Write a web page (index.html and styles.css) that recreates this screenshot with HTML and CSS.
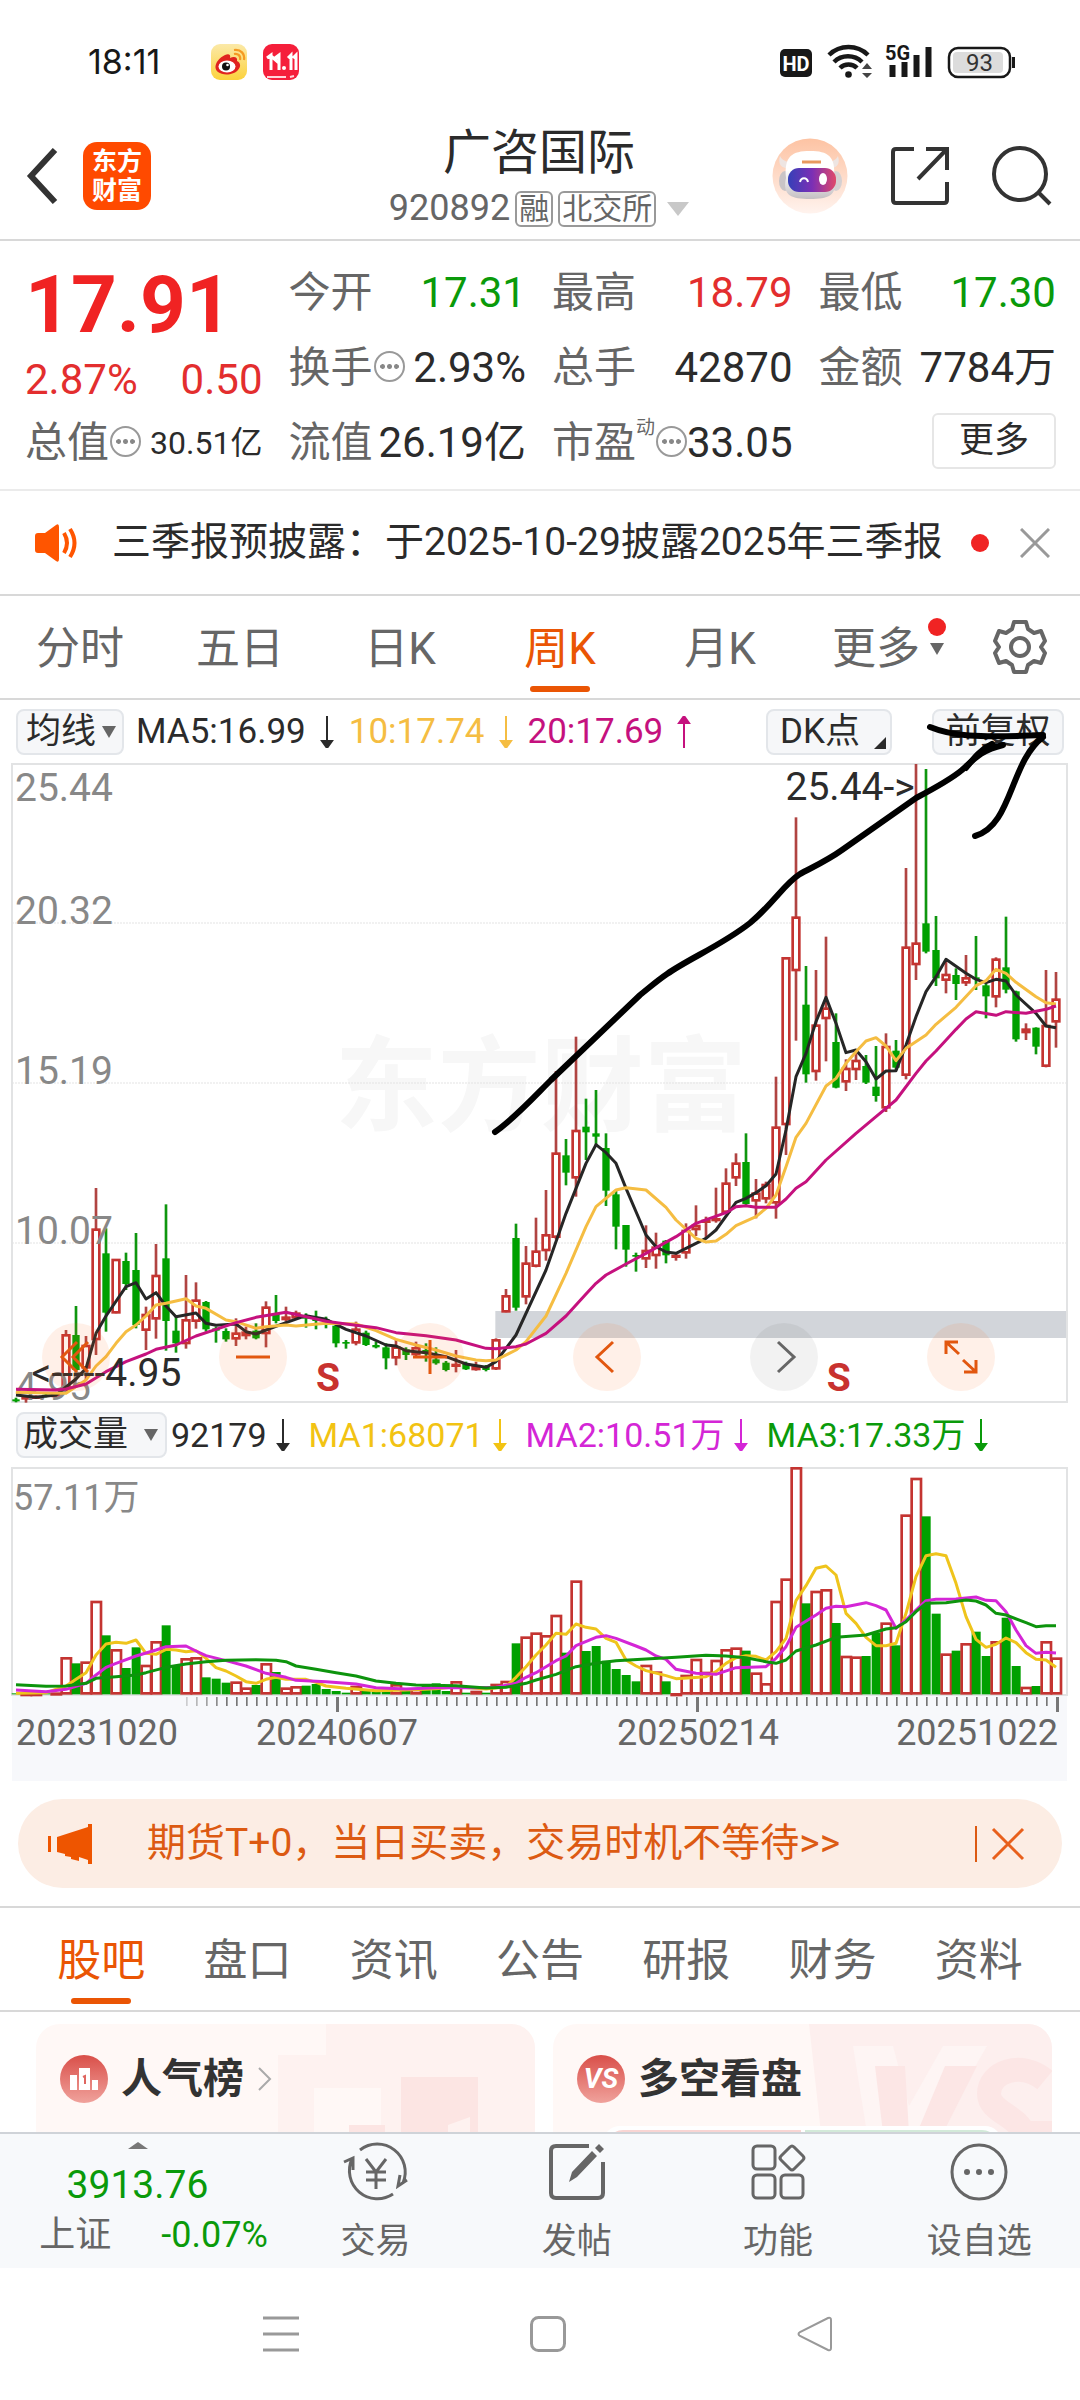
FILE: index.html
```html
<!DOCTYPE html>
<html lang="zh-CN">
<head>
<meta charset="utf-8">
<meta name="viewport" content="width=device-width, initial-scale=1">
<title>广咨国际 920892</title>
<link rel="stylesheet" href="styles.css">
</head>
<body>
<div class="status">
  <span class="clock">18:11</span>
  <svg class="app-ico" width="36" height="36" viewBox="0 0 36 36"><defs><linearGradient id="wb" x2="0" y2="1"><stop offset="0" stop-color="#fbe9a8"/><stop offset="1" stop-color="#fcd23c"/></linearGradient></defs><rect width="36" height="36" rx="9" fill="url(#wb)"/><path d="M14 11c4-2 6 0 5 3 4-2 8-1 7 3 4 2 4 6 1 9-4 5-15 6-20 2-6-5 0-14 7-17z" fill="#e0231f"/><ellipse cx="16" cy="22.500" rx="8.500" ry="6" fill="#fff"/><circle cx="15" cy="22.500" r="4" fill="#111"/><circle cx="16.500" cy="21" r="1.300" fill="#fff"/><path d="M23 10c4-1 7 2 6 6M23 6c7-1 11 4 10 10" fill="none" stroke="#f59a23" stroke-width="2.200"/></svg>
  <svg class="app-ico2" width="36" height="36" viewBox="0 0 36 36"><rect width="36" height="36" rx="9" fill="#f51f3b"/><path d="M4 14l4-3v15M12 14l4-3v15M8 12l8 7M25 14l3-3v15M30 14l3-3v15" fill="none" stroke="#fff" stroke-width="3"/><circle cx="21" cy="24" r="2" fill="#fff"/><path d="M4 33h19M27 33l4-1" stroke="#ffd5da" stroke-width="2"/></svg>
  <svg class="signals" width="236" height="38" viewBox="780 43 236 38">
    <rect x="780" y="49" width="32" height="28" rx="5" fill="#181818"/>
    <text x="796" y="71" class="hd">HD</text>
    <g fill="none" stroke="#181818" stroke-width="4.500"><path d="M829 55a28 28 0 0 1 39 0M834 62a20 20 0 0 1 28 0M840 68a12 12 0 0 1 17 0"/></g>
    <circle cx="848.500" cy="74.500" r="3.300" fill="#181818"/><path d="M862 69l5-6 5 6zM862 73l5 5 5-5z" fill="#444"/>
    <text x="885" y="60" class="fiveg">5G</text>
    <path d="M892.500 65v12M904.500 62v15M916.500 55v22M928.500 47v30" stroke="#181818" stroke-width="6"/>
    <rect x="949" y="48" width="61" height="29" rx="9" fill="#fff" stroke="#181818" stroke-width="2.500"/><rect x="953" y="52" width="50" height="21" rx="4" fill="#dcdcdc"/><path d="M1013.500 57v11" stroke="#181818" stroke-width="3"/>
    <text x="979.500" y="71" class="batt">93</text>
  </svg>
</div>

<header class="head">
  <div class="head-left">
    <button class="plain" aria-label="返回"><svg width="32" height="56" viewBox="0 0 32 56"><path d="M29 2L5 28l24 26" fill="none" stroke="#333" stroke-width="6"/></svg></button>
    <a class="logo" href="#">东方<br>财富</a>
  </div>
  <div class="head-mid">
    <h1>广咨国际</h1>
    <div class="code"><span>920892</span><i class="badge">融</i><i class="badge">北交所</i><b class="tri-big"></b></div>
  </div>
  <div class="head-right">
    <button class="plain" aria-label="助手"><svg width="76" height="76" viewBox="0 0 76 76"><defs><linearGradient id="ra" x2="0" y2="1"><stop offset="0" stop-color="#fdc3a3"/><stop offset="1" stop-color="#fff3ee"/></linearGradient><linearGradient id="rb"><stop offset="0" stop-color="#3540b8"/><stop offset=".5" stop-color="#7b2fb5"/><stop offset="1" stop-color="#e0486a"/></linearGradient><linearGradient id="rc" x2="0" y2="1"><stop offset=".4" stop-color="#fff"/><stop offset="1" stop-color="#c4bfc2"/></linearGradient></defs><circle cx="38" cy="38" r="37.500" fill="url(#ra)"/><path d="M8 18c-2 7 0 11 6 12l5-6c-5 0-9-2-11-6zM66 18c2 7 0 11-6 12l-5-6c5 0 9-2 11-6z" fill="#eee5e2"/><ellipse cx="13" cy="43" rx="6" ry="10" fill="#c9c4c6"/><ellipse cx="64" cy="43" rx="6" ry="10" fill="#d5d0d2"/><path d="M14 40C12 18 20 13 38 13s26 5 24 27c4 18-6 21-24 21S10 58 14 40z" fill="url(#rc)"/><rect x="16" y="30" width="48" height="24" rx="11" fill="url(#rb)"/><path d="M28 44c1-5 7-5 8 0" fill="none" stroke="#fff" stroke-width="2"/><ellipse cx="51" cy="41" rx="4" ry="6" fill="#fff"/><path d="M30 24h19" stroke="#e8995f" stroke-width="3"/></svg></button>
    <button class="plain" aria-label="分享"><svg width="60" height="60" viewBox="0 0 60 60" fill="none" stroke="#333" stroke-width="4"><path d="M24 3H6Q3 3 3 6v48q0 3 3 3h48q3 0 3-3V36M36 3h21v21M57 3L28 33"/></svg></button>
    <button class="plain" aria-label="搜索"><svg width="60" height="60" viewBox="0 0 60 60" fill="none" stroke="#333" stroke-width="4"><circle cx="28" cy="28" r="26"/><path d="M46 46l12 12"/></svg></button>
  </div>
</header>

<section class="quote">
  <div class="last"><strong class="red">17.91</strong><div class="pair red"><span>2.87%</span><span>0.50</span></div></div>
  <div class="pair"><label>今开</label><span class="green">17.31</span></div>
  <div class="pair"><label>最高</label><span class="red">18.79</span></div>
  <div class="pair"><label>最低</label><span class="green">17.30</span></div>
  <div class="pair"><label>换手<i class="more-dot"></i></label><span>2.93%</span></div>
  <div class="pair"><label>总手</label><span>42870</span></div>
  <div class="pair"><label>金额</label><span>7784万</span></div>
  <div class="pair"><label>总值<i class="more-dot"></i></label><span class="small">30.51亿</span></div>
  <div class="pair"><label>流值</label><span>26.19亿</span></div>
  <div class="pair"><label>市盈<sup>动</sup><i class="more-dot"></i></label><span>33.05</span></div>
  <div class="pair end"><button class="more">更多</button></div>
</section>

<section class="notice">
  <svg width="46" height="38" viewBox="0 0 46 38"><path d="M1 12q0-3 3-3h7L22 1q3-2 3 2v32q0 4-3 2l-11-8H4q-3 0-3-3z" fill="#ff5500"/><path d="M30 9q6 10 0 20M36 5q9 14 0 28" fill="none" stroke="#ff5500" stroke-width="4"/></svg>
  <p>三季报预披露：于2025-10-29披露2025年三季报</p>
  <i class="dot"></i>
  <button class="plain" aria-label="关闭"><svg width="30" height="30" viewBox="0 0 30 30"><path d="M1 1l28 28M29 1L1 29" stroke="#999" stroke-width="3"/></svg></button>
</section>

<nav class="periods">
  <a href="#">分时</a><a href="#">五日</a><a href="#">日K</a><a href="#" class="on">周K</a><a href="#">月K</a>
  <a href="#" class="has-more">更多<b class="tri"></b><i class="dot"></i></a>
  <button class="plain" aria-label="设置"><svg width="56" height="56" viewBox="0 0 56 56" fill="none" stroke="#666" stroke-width="4"><path d="M22 3h12l2 7 6 4 7-2 4 10-4 6 4 6-4 10-7-2-6 4-2 7H22l-2-7-6-4-7 2-4-10 4-6-4-6L7 12l7 2 6-4z" stroke-linejoin="round"/><circle cx="28" cy="28" r="9"/></svg></button>
</nav>

<section class="chart">
  <div class="bar">
    <button class="chip">均线<b class="tri"></b></button>
    <span>MA5:16.99</span><svg class="arr" viewBox="0 0 14 32"><path d="M7 0v28M2 25h10l-5 7z"/></svg>
    <span class="c-y">10:17.74</span><svg class="arr c-y" viewBox="0 0 14 32"><path d="M7 0v28M2 25h10l-5 7z"/></svg>
    <span class="c-m">20:17.69</span><svg class="arr c-m" viewBox="0 0 14 32"><path d="M7 32V4M2 7h10L7 0z"/></svg>
    <button class="chip dk">DK点<b class="corner"></b></button>
    <button class="chip fq">前复权</button>
  </div>
  <div class="plot">
    <svg id="price" viewBox="0 0 3240 1920"></svg>
    <div class="tools">
      <button aria-label="最左"><svg viewBox="0 0 68 68"><path d="M35 19L20 34l15 15M46 19L31 34l15 15"/></svg></button>
      <button aria-label="缩小"><svg viewBox="0 0 68 68"><path d="M17 34h34"/></svg></button>
      <button aria-label="放大"><svg viewBox="0 0 68 68"><path d="M17 34h34M34 17v34"/></svg></button>
      <button aria-label="左移"><svg viewBox="0 0 68 68"><path d="M40 19L24 34l16 15"/></svg></button>
      <button aria-label="右移" class="off"><svg viewBox="0 0 68 68"><path d="M28 19l16 15-16 15"/></svg></button>
      <button aria-label="全屏"><svg viewBox="0 0 68 68"><path d="M19 31V19h12M19 19l13 12M49 37v12H37M49 49L36 37"/></svg></button>
    </div>
  </div>
  <div class="bar vol">
    <button class="chip">成交量<b class="tri"></b></button>
    <span>92179</span><svg class="arr" viewBox="0 0 14 32"><path d="M7 0v28M2 25h10l-5 7z"/></svg>
    <span class="v-y">MA1:68071</span><svg class="arr v-y" viewBox="0 0 14 32"><path d="M7 0v28M2 25h10l-5 7z"/></svg>
    <span class="v-m">MA2:10.51万</span><svg class="arr v-m" viewBox="0 0 14 32"><path d="M7 0v28M2 25h10l-5 7z"/></svg>
    <span class="v-g">MA3:17.33万</span><svg class="arr v-g" viewBox="0 0 14 32"><path d="M7 0v28M2 25h10l-5 7z"/></svg>
  </div>
  <svg id="volume" viewBox="0 231 3240 942"></svg>
  <svg class="pen" viewBox="0 700 1080 450"><path d="M495 1132C515 1118 533 1098 551 1080L640 995C650 987 658 980 667 974C690 958 722 945 750 923C775 902 784 884 800 874C815 866 828 860 842 850L916 798C935 788 950 780 962 770C975 758 982 750 1003 745"/><path d="M992 744C980 750 974 758 966 768"/><path d="M930 727C952 736 975 738 1043 735"/><path d="M1043 737C1010 762 1012 826 975 836"/></svg>
</section>

<aside class="promo">
  <svg width="46" height="40" viewBox="0 0 46 40" fill="#ee5500"><path d="M0 12h3v16H0zM9 13L40 3V0h4v40h-4v-4l-9-3v4l-8-2v-2l-6-1v-2l-8-2z"/></svg>
  <p>期货T+0，当日买卖，交易时机不等待&gt;&gt;</p>
  <i class="vr"></i>
  <button class="plain" aria-label="关闭"><svg width="34" height="34" viewBox="0 0 34 34"><path d="M2 2l30 30M32 2L2 32" stroke="#e8601c" stroke-width="3"/></svg></button>
</aside>

<nav class="sections"><a href="#" class="on">股吧</a><a href="#">盘口</a><a href="#">资讯</a><a href="#">公告</a><a href="#">研报</a><a href="#">财务</a><a href="#">资料</a></nav>

<main class="cards">
  <article class="card">
    <svg class="art" viewBox="0 0 499 109" preserveAspectRatio="xMaxYMin slice"><g fill="#fdebe9"><path d="M290 0h209v109H345V64h-67v45h-36V31h48z" opacity=".5"/><path d="M365 53h77v56h-77zM313 101h36v8h-36z" fill="#fce5e3"/><path d="M412 101l22-8v16h-22z" fill="#fef2f0"/></g></svg>
    <h2><svg width="48" height="48" viewBox="0 0 48 48"><circle cx="24" cy="24" r="24" fill="url(#bd)"/><defs><linearGradient id="bd" x2="0" y2="1"><stop offset="0" stop-color="#d94f49"/><stop offset="1" stop-color="#f0a29c"/></linearGradient></defs><path d="M10 20h7v15h-7zM19 13h11v22H19zM32 25h6v10h-6z" fill="#fff"/><path d="M23 22l2-1v8" fill="none" stroke="#df6660" stroke-width="2"/></svg>人气榜<svg class="go" width="16" height="26" viewBox="0 0 16 26"><path d="M2 2l11 11L2 24" fill="none" stroke="#aaa" stroke-width="2"/></svg></h2>
    <p class="teaser">大家都在看的热门个股排行</p>
  </article>
  <article class="card">
    <svg class="art" viewBox="0 0 499 109" preserveAspectRatio="xMaxYMin slice"><path d="M256 0h243v109H268z" fill="#fdefee"/><path d="M300 22h40l16 60 34-60h44l-50 87h-70z" fill="#fef5f4"/><path d="M322 42h30l4 67h-26zM392 42h32l-34 67h-26z" fill="#fce6e5"/><path d="M492 56c-24-20-56-8-56 14 0 18 30 22 34 39h29" fill="none" stroke="#fce6e5" stroke-width="24"/></svg>
    <h2><svg width="48" height="48" viewBox="0 0 48 48"><circle cx="24" cy="24" r="24" fill="url(#bd)"/><text x="24" y="33" class="vs">VS</text></svg>多空看盘</h2>
    <div class="meter"><i></i><i></i></div>
  </article>
</main>

<footer class="dock">
  <a class="index" href="#"><b class="tri-up"></b><span class="green pts">3913.76</span><span class="idx-row"><span>上证</span><span class="green">-0.07%</span></span></a>
  <a href="#"><svg width="66" height="60" viewBox="0 0 66 60" fill="none" stroke="#666" stroke-width="3"><path d="M17 8a28 28 0 0 1 43 33M50 52A28 28 0 0 1 9 17M1 20l9-4v12M64 38l-9 6 2-11" /><path d="M23 17l10 13 10-13M33 30v17M23 30h20M23 38h20"/></svg><span>交易</span></a>
  <a href="#"><svg width="60" height="60" viewBox="0 0 60 60" fill="none" stroke="#666" stroke-width="4"><path d="M42 4H9Q4 4 4 9v42q0 5 5 5h42q5 0 5-5V20"/><path d="M22 40l3-10L45 9l5 5-20 21zM48 6l4-4 5 5-4 4z" fill="#666" stroke="none"/></svg><span>发帖</span></a>
  <a href="#"><svg width="60" height="60" viewBox="0 0 60 60" fill="none" stroke="#666" stroke-width="3"><rect x="5" y="4" width="22" height="23" rx="4"/><rect x="5" y="33" width="22" height="23" rx="4"/><rect x="33" y="33" width="22" height="23" rx="4"/><path d="M42 5q2-2 4 0l9 9q2 2 0 4l-9 9q-2 2-4 0l-9-9q-2-2 0-4z"/></svg><span>功能</span></a>
  <a href="#"><svg width="60" height="60" viewBox="0 0 60 60"><circle cx="30" cy="30" r="27" fill="none" stroke="#666" stroke-width="3"/><g fill="#666"><circle cx="18" cy="30" r="3"/><circle cx="30" cy="30" r="3"/><circle cx="42" cy="30" r="3"/></g></svg><span>设自选</span></a>
</footer>
<div class="sysnav">
  <button class="plain" aria-label="菜单"><svg width="36" height="36" viewBox="0 0 36 36"><path d="M0 2h36M0 18h36M0 34h36" stroke="#999" stroke-width="3"/></svg></button>
  <button class="plain" aria-label="主页"><svg width="36" height="36" viewBox="0 0 36 36"><rect x="1.500" y="1.500" width="33" height="33" rx="7" fill="none" stroke="#999" stroke-width="3"/></svg></button>
  <button class="plain" aria-label="后退"><svg width="36" height="36" viewBox="0 0 36 36"><path d="M31 2q3-1 3 2v28q0 3-3 2L3 20q-3-2 0-4z" fill="none" stroke="#999" stroke-width="2"/></svg></button>
</div>
<script src="chart.js"></script>
</body>
</html>
```
FILE: styles.css
```css
* { box-sizing: border-box; }
body { margin: 0; height: 100vh; display: flex; flex-direction: column; background: #fff; color: #2b2b2b; font-family: Roboto, "Noto Sans CJK SC", sans-serif; font-size: 35px; line-height: 1.2; }
body > * { flex: none; }
h1, h2, p { margin: 0; font-weight: 400; }
i { font-style: normal; }
a { color: inherit; text-decoration: none; }
svg { display: block; }
button { font: inherit; color: inherit; }
.plain { border: 0; padding: 0; background: none; }
.red { color: #e32e2e; }
.green { color: #0a9a0a; }
.dot { width: 18px; height: 18px; border-radius: 50%; background: #f02323; }

.status { height: 112px; padding: 12px 64px 0 88px; display: flex; align-items: center; color: #181818; }
.clock { font-family: Inter, sans-serif; font-size: 34px; width: 123px; }
.app-ico2 { margin-left: 16px; }
.signals { margin-left: auto; }
.hd { font: 700 20px Roboto, sans-serif; fill: #fff; text-anchor: middle; }
.fiveg { font: 700 20px Roboto, sans-serif; fill: #181818; }
.batt { font: 400 24px Roboto, sans-serif; fill: #333; text-anchor: middle; }

.head { display: grid; grid-template-columns: 1fr auto 1fr; align-items: center; height: 129px; padding: 0 28px 0 26px; border-bottom: 2px solid #d8d8d8; }
.head-left, .head-right { display: flex; align-items: center; }
.head-left { gap: 25px; }
.head-right { justify-content: flex-end; gap: 42px; }
.logo { width: 68px; height: 68px; border-radius: 14px; background: #ff4a00; color: #fff; font-weight: 700; font-size: 25px; line-height: 29px; text-align: center; padding-top: 5px; }
.head-mid h1 { font-size: 48px; line-height: 58px; text-align: center; }
.code { display: flex; align-items: center; gap: 5px; margin-top: 9px; height: 36px; font-size: 36px; color: #666; }
.badge { font-size: 30px; line-height: 32px; border: 2px solid #999; border-radius: 6px; padding: 0 2px; }
.tri-big { border: 11px solid transparent; border-top: 14px solid #c8c8c8; border-bottom: 0; margin-left: 6px; }

.quote { display: grid; grid-template-columns: repeat(4, 1fr); grid-auto-rows: 75px; column-gap: 26px; padding: 15px 24px 8px 25px; border-bottom: 2px solid #ebebeb; font-size: 42px; }
.last { grid-row: span 2; display: flex; flex-direction: column; }
.last strong { font-size: 80px; line-height: 98px; font-weight: 700; color: #f02323; }
.last .pair { height: 54px; }
.pair { display: flex; align-items: center; justify-content: space-between; white-space: nowrap; }
.pair.end { justify-content: flex-end; align-items: flex-start; padding-top: 7px; }
.pair label { color: #666; display: flex; align-items: center; }
.pair sup { font-size: 19px; line-height: 20px; align-self: flex-start; }
.more-dot { width: 31px; height: 31px; margin: 0 0 4px 1px; border: 2px solid #999; border-radius: 50%; background: radial-gradient(circle, #888 2px, transparent 3px) center / 7px 7px content-box repeat-x; padding: 10px 3px; }
.small { font-size: 32px; }
.more { width: 124px; height: 56px; border: 2px solid #e6e6e6; border-radius: 6px; background: #fff; font-size: 35px; padding: 0; }

.notice { height: 105px; display: flex; align-items: center; padding: 0 30px 0 34px; border-bottom: 2px solid #d8d8d8; font-size: 39px; }
.notice p { margin-left: 32px; flex: 1; white-space: nowrap; }
.notice .dot { margin-right: 31px; }

.periods, .sections { display: grid; height: 104px; border-bottom: 2px solid #d8d8d8; font-size: 44px; color: #666; }
.periods { grid-template-columns: repeat(6, 4fr) 3fr; }
.periods > *, .sections > * { display: flex; align-items: center; justify-content: center; position: relative; }
.periods a, .sections a { padding-top: 4px; }
.periods .on, .sections .on { color: #ea5504; }
.on::after { content: ""; position: absolute; bottom: 6px; left: 50%; margin-left: -30px; width: 60px; height: 6px; border-radius: 3px; background: #ea5504; }
.tri { border: 7px solid transparent; border-top: 12px solid #666; border-bottom: 0; }
.periods .has-more { padding-left: 16px; }
.has-more .tri { margin-left: 10px; }
.has-more .dot { position: absolute; top: 22px; right: 14px; }
.sections { grid-template-columns: repeat(7, 1fr); padding: 0 28px; border-top: 2px solid #d8d8d8; height: 106px; }

.chart { position: relative; }
.bar { display: flex; align-items: center; height: 63px; padding: 0 16px; white-space: nowrap; }
.bar.vol { height: 64px; font-size: 34px; }
.chip { display: flex; align-items: center; justify-content: space-between; height: 46px; width: 108px; padding: 0 6px 0 8px; border: 2px solid #e3e6ea; border-radius: 8px; background: #f6f7f9; font-size: 35px; }
.chip + span { margin-left: 12px; }
.vol .chip { width: 151px; padding: 0 7px 0 5px; }
.vol .chip + span { margin-left: 4px; }
.dk { margin-left: auto; width: 126px; padding: 0 4px 0 12px; }
.fq { margin-left: 40px; width: 132px; justify-content: center; padding: 0; }
.corner { align-self: flex-end; margin-bottom: 4px; border-left: 12px solid transparent; border-bottom: 12px solid #2b2b2b; }
.arr { width: 14px; height: 32px; margin: 0 15px 0 14px; fill: currentColor; stroke: currentColor; stroke-width: 2; }
.vol .arr { margin: 0 19px 0 9px; }
.c-y { color: #f5bd42; } .c-m { color: #c5117e; }
.v-y { color: #f2c313; } .v-m { color: #d426d6; } .v-g { color: #0a9a0a; }
.plot { position: relative; }
#price, #volume { width: 100%; }
.tools { position: absolute; left: 42px; right: 85px; bottom: 12px; display: flex; justify-content: space-between; }
.tools button { width: 68px; height: 68px; padding: 0; border: 0; border-radius: 50%; background: rgba(255, 107, 30, 0.1); }
.tools svg { fill: none; stroke: #e2570f; stroke-width: 3; }
.tools .off { background: rgba(0, 0, 0, 0.05); }
.tools .off svg { stroke: #666; }
.pen { position: absolute; left: 0; top: 0; width: 100%; pointer-events: none; fill: none; stroke: #000; stroke-width: 6; stroke-linecap: round; }

.frame { fill: none; stroke: #e2e3e4; stroke-width: 6; }
.band { fill: #f7f8fb; }
.grid { stroke: #e3e3e3; stroke-width: 3; stroke-dasharray: 6 3; }
.mark { font-weight: 700; font-size: 309px; fill: #f7f7f7; }
.gap { fill: #d2d5da; }
.axis, .note { font-size: 117px; fill: #888; }
.note { fill: #2b2b2b; }
.vaxis, .date { font-size: 108px; fill: #888; }
.date { fill: #666; }
.sig { font-size: 117px; font-weight: 700; fill: #c8322f; text-anchor: middle; }
.up { fill: #fff; stroke: #c43431; stroke-width: 8; }
.up-wick { stroke: #b04442; stroke-width: 8; }
.down { fill: #00a000; }
.down-wick { stroke: #0f960f; stroke-width: 8; }
.line { fill: none; stroke-width: 9; stroke-linejoin: round; }

.promo { display: flex; align-items: center; height: 89px; margin: 18px; padding: 0 18px 0 30px; border-radius: 45px; background: #fcede4; color: #dc5a12; font-size: 39px; }
.promo p { margin-left: 53px; flex: 1; white-space: nowrap; }
.vr { width: 2px; height: 36px; background: #dc5a12; margin-right: 14px; }
.promo .plain { margin-right: 19px; }

.cards { flex: 1; min-height: 0; overflow: hidden; display: grid; grid-template-columns: 1fr 1fr; gap: 18px; padding: 12px 28px 0 36px; }
.card { position: relative; border-radius: 24px 24px 0 0; background: #fff8f6; overflow: hidden; height: 180px; }
.art { position: absolute; left: 0; top: 0; width: 100%; }
.card h2 { position: relative; display: flex; align-items: center; gap: 13px; font-size: 41px; font-weight: 700; line-height: 60px; padding: 25px 24px 0; color: #333; }
.vs { font: italic 700 28px Roboto, sans-serif; fill: #fff; text-anchor: middle; }
.teaser { position: relative; padding: 22px 90px 0; font-size: 26px; line-height: 30px; color: #777; }
.meter { position: relative; display: flex; gap: 4px; margin: 17px 50px 0; padding: 4px; background: #fff; border-radius: 20px; height: 34px; overflow: hidden; }
.meter i { flex: 1; background: #f9d5d3; border-radius: 16px 0 0 0; }
.meter i + i { background: #d3ead9; border-radius: 0 16px 0 0; }

.dock { display: grid; grid-template-columns: 275px repeat(4, 1fr); height: 136px; background: #f7f9fb; border-top: 2px solid #cfd3d8; color: #666; }
.dock a { display: flex; flex-direction: column; align-items: center; line-height: 44px; padding-top: 8px; }
.dock a > span { margin-top: 18px; }
.dock .index { padding: 8px 0 0; }
.tri-up { border: 10px solid transparent; border-bottom: 7px solid #777; border-top: 0; }
.dock .index .pts { font-size: 39px; margin-top: 14px; }
.dock .index .idx-row { display: flex; gap: 50px; margin-top: 6px; padding-left: 32px; font-size: 36px; }
.sysnav { height: 132px; display: flex; align-items: center; justify-content: space-between; padding: 0 247px 0 263px; }
```
FILE: chart.js
```js
// Weekly candles: direction, high, body top, body bottom, low, volume top.
// Each slot is 30 units wide; three units make one CSS pixel at 1080px.
const candles = `
g 1904 1909 1915 1918 910|r 1898 1901 1908 1919 910|r 1897 1899 1904 1906 910|g 1893 1895 1901 1903 910|r 1892 1894 1899 1902 908
r 1701 1714 1884 1886 802|g 1629 1716 1821 1831 820|r 1719 1746 1816 1851 815|r 1275 1397 1731 1776 633|g 1396 1471 1649 1706 736
r 1488 1488 1651 1651 778|g 1469 1494 1563 1581 834|g 1410 1521 1686 1696 772|r 1631 1653 1703 1761 825|r 1443 1536 1669 1727 754
g 1324 1486 1674 1763 706|g 1661 1703 1741 1769 826|r 1536 1669 1743 1757 805|r 1558 1610 1676 1697 802|g 1614 1617 1699 1706 862
g 1691 1696 1703 1739 866|g 1696 1704 1729 1736 878|r 1666 1709 1729 1749 875|r 1691 1706 1719 1729 893|g 1681 1703 1726 1729 885
r 1615 1631 1713 1753 820|g 1596 1651 1674 1681 846|r 1631 1661 1671 1676 893|r 1643 1649 1666 1669 889|g 1651 1661 1667 1694 887
g 1643 1666 1674 1699 882|g 1661 1669 1676 1696 897|g 1686 1688 1741 1753 903|g 1731 1737 1742 1757 908|r 1676 1697 1741 1747 888
g 1703 1709 1746 1749 903|g 1736 1746 1753 1756 906|g 1741 1753 1786 1819 905|r 1731 1751 1786 1807 883|g 1753 1759 1776 1791 903
r 1736 1753 1776 1783 897|g 1741 1761 1771 1796 888|g 1753 1789 1801 1805 880|g 1794 1799 1821 1825 903|r 1761 1803 1811 1828 874
g 1796 1803 1819 1821 908|r 1796 1809 1821 1823 903|g 1806 1811 1821 1825 908|r 1726 1729 1819 1821 882|r 1578 1597 1648 1648 873
g 1382 1425 1634 1643 760|r 1449 1499 1603 1624 740|r 1364 1463 1511 1513 728|r 1281 1414 1464 1493 736|r 924 1169 1424 1429 675
g 1128 1177 1229 1267 788|r 821 1101 1246 1301 572|g 1007 1091 1108 1191 783|g 981 1111 1121 1146 768|g 1111 1155 1283 1329 812
g 1283 1294 1391 1459 837|g 1386 1386 1460 1511 855|g 1469 1476 1481 1526 874|r 1387 1461 1489 1515 825|r 1409 1451 1479 1517 845
g 1431 1433 1477 1501 874|r 1471 1476 1479 1493 910|r 1381 1401 1471 1487 855|r 1327 1386 1401 1419 807|r 1361 1371 1376 1426 846
r 1274 1366 1374 1379 810|r 1216 1259 1349 1351 778|r 1171 1199 1246 1269 773|g 1111 1197 1323 1329 782|r 1248 1289 1315 1366 848
r 1256 1263 1309 1321 880|r 941 1091 1321 1367 633|r 583 583 1086 1176 566|r 163 461 624 833 232|g 609 725 934 959 640
r 621 785 927 953 603|r 521 734 768 895 598|g 751 837 974 976 699|r 889 915 958 984 798|r 861 891 921 951 800
g 876 909 959 963 798|g 849 971 999 1016 728|r 811 849 1036 1047 698|g 831 863 914 921 766|r 315 551 938 949 374
r 3 539 606 651 264|g 18 481 566 571 379|g 459 561 646 669 671|r 596 633 653 691 791|g 616 636 663 711 782
r 576 643 661 669 760|g 519 643 649 681 725|g 661 667 700 766 798|r 583 587 703 733 754|g 461 613 680 691 683
g 683 685 829 836 828|r 781 797 810 831 891|g 793 794 851 874 888|r 621 786 911 913 754|r 627 707 778 854 803`
  .trim().split(/[|\n]/).map(row => row.split(' '));

// Moving averages as "slot y" pairs.
const priceLines = {
  '#262626': '0 1896,2 1903,4 1896,6 1848,7 1816,8 1711,9 1659,11 1571,12 1559,13 1608,14 1589,15 1629,16 1661,18 1650,19 1681,20 1687,22 1683,23 1706,24 1713,25 1701,27 1679,29 1658,31 1669,33 1699,35 1719,37 1746,38 1749,39 1763,41 1769,43 1781,45 1803,47 1813,48 1796,50 1716,53 1521,55 1351,57 1201,58 1145,59 1169,60 1201,61 1276,63 1416,64 1451,65 1467,66 1471,68 1441,69 1426,70 1401,72 1318,73 1306,74 1289,75 1268,76 1233,77 1101,78 941,79 871,80 776,81 703,82 781,83 869,84 861,85 896,86 948,87 924,88 923,89 846,90 761,91 686,92 641,93 589,95 631,96 649,97 659,98 649,99 654,100 696,102 751,103 789,104 794',
  '#f5bd42': '0 1888,3 1890,5 1891,7 1851,8 1809,9 1781,10 1741,11 1706,12 1686,13 1659,14 1626,15 1621,17 1607,18 1629,19 1636,21 1671,22 1676,24 1696,25 1691,27 1686,28 1689,31 1681,34 1683,36 1703,38 1729,40 1746,42 1761,44 1779,46 1791,47 1793,48 1791,50 1761,51 1736,53 1659,55 1531,57 1391,58 1331,60 1281,61 1274,63 1281,65 1333,66 1371,68 1426,69 1437,70 1434,71 1414,72 1388,74 1361,75 1336,76 1296,77 1211,78 1123,79 1081,81 969,82 946,83 901,84 866,85 834,86 824,87 849,88 893,89 856,91 816,92 784,94 733,96 668,97 653,98 619,99 631,100 658,102 701,103 719,104 723',
  '#c5117e': '0 1879,4 1881,5 1878,7 1863,9 1826,11 1796,13 1773,14 1759,16 1746,18 1719,20 1699,22 1679,24 1663,27 1648,29 1661,31 1675,33 1683,36 1694,38 1709,41 1718,44 1731,47 1756,48 1757,50 1751,51 1743,53 1711,55 1659,57 1593,58 1561,59 1536,61 1503,63 1471,66 1421,68 1381,71 1349,72 1331,73 1328,74 1333,76 1333,77 1308,78 1276,79 1256,81 1191,84 1111,86 1061,88 1011,90 931,91 894,92 864,94 799,95 768,96 746,98 757,99 746,101 751,103 739,104 729'
};
const volumeLines = {
  '#efc41c': '0 910,3 908,5 888,6 868,7 848,8 795,9 762,10 757,11 760,12 750,13 790,14 793,15 778,16 780,17 785,18 782,19 805,20 833,21 843,22 858,23 875,24 880,25 868,26 862,27 868,29 868,30 877,31 888,33 895,36 902,39 900,42 896,44 890,47 897,49 890,50 862,51 830,52 795,53 765,54 730,55 733,56 702,57 712,58 717,59 745,60 757,61 810,62 828,63 842,65 857,66 866,69 860,70 845,71 820,72 803,73 797,74 799,75 810,76 785,77 745,78 632,79 587,80 535,81 528,82 555,83 670,84 700,85 742,86 767,87 767,88 760,89 670,90 560,91 497,92 491,93 497,94 580,95 680,96 748,97 772,98 763,99 744,100 758,101 788,102 808,103 810,104 832',
  '#d426d6': '0 900,3 905,5 898,7 880,8 855,9 832,10 820,12 798,14 780,15 770,17 768,18 783,19 797,21 812,23 828,25 850,27 862,28 871,31 875,34 882,36 893,39 897,42 893,46 893,48 892,50 880,51 862,52 848,54 812,55 798,56 767,58 742,59 737,60 745,62 768,63 780,64 798,65 808,66 838,68 850,70 853,72 833,75 830,76 805,77 770,78 712,80 675,81 655,82 649,83 650,85 638,86 647,87 660,88 715,89 690,90 660,91 632,92 628,94 627,96 621,97 631,98 632,99 665,100 720,101 767,102 790,103 787,104 789',
  '#0d940d': '0 884,3 889,5 888,7 880,8 865,10 860,12 855,13 848,15 832,17 822,19 815,21 811,24 809,26 811,27 815,28 828,30 838,32 848,34 858,36 873,38 880,40 885,44 887,47 894,49 892,51 880,52 870,54 853,56 830,58 820,60 812,63 807,66 802,69 796,71 798,73 803,75 815,76 820,77 810,78 783,80 765,82 742,85 735,87 717,88 713,89 695,90 665,91 640,93 638,95 630,96 633,97 645,98 670,99 675,101 698,102 710,103 707,104 707'
};

const slot = i => 48 + 30 * i;
const seg = (cls, x1, y1, x2, y2) => `<path class="${cls}" d="M${x1} ${y1}L${x2} ${y2}"/>`;
const box = (cls, x, y, w, h) => `<rect class="${cls}" x="${x}" y="${y}" width="${w}" height="${Math.max(h, 2)}"/>`;
const label = (cls, x, y, text, anchor = 'start') => `<text class="${cls}" x="${x}" y="${y}" text-anchor="${anchor}">${text}</text>`;
const curves = lines => Object.entries(lines).map(([color, pts]) =>
  `<polyline class="line" stroke="${color}" points="${pts.split(',').map(p => { const [i, y] = p.split(' '); return slot(+i) + ',' + y; }).join(' ')}"/>`).join('');

let price = label('mark', 1622, 1080, '东方财富', 'middle');
for (const y of [480, 960, 1440]) price += seg('grid', 36, y, 3201, y);
price += box('gap', 1486, 1644, 1715, 81) + box('frame', 36, 3, 3165, 1914);
let volume = box('band', 36, 918, 3165, 255) + box('frame', 36, 234, 3165, 681);

candles.forEach(([dir, ...nums], i) => {
  const [high, top, bottom, low, vol] = nums.map(Number);
  const x = slot(i);
  if (dir === 'r') {
    price += seg('up-wick', x, high, x, low) + box('up', x - 10, top + 3, 20, bottom - top - 6);
    volume += box('up', x - 13, vol + 3, 28, 913 - vol - 6);
  } else {
    price += seg('down-wick', x, high, x, low) + box('down', x - 11, top, 22, bottom - top);
    volume += box('down', x - 13, vol, 27, 913 - vol);
  }
});

price += label('sig', 984, 1885, 'S') + label('sig', 2516, 1885, 'S');
[['25.44', 115], ['20.32', 482], ['15.19', 962], ['10.07', 1442], ['4.95', 1911]]
  .forEach(([t, y]) => { price += label('axis', 45, y, t); });
price += curves(priceLines);
price += label('note', 544, 1868, '&lt;-----4.95', 'end') + label('note', 2744, 111, '25.44-&gt;', 'end');
document.getElementById('price').innerHTML = price;

volume += curves(volumeLines) + label('vaxis', 39, 360, '57.11万');
for (let i = 17; i < 105; i++) {
  const major = i === 32 || i === 68 || i === 104;
  volume += `<rect x="${slot(i)}" y="921" width="${major ? 9 : 5}" height="${major ? 45 : 27}" fill="#777" opacity="${Math.min(1, (i - 15) / 6)}"/>`;
}
volume += label('date', 48, 1064, '20231020') + label('date', 1011, 1064, '20240607', 'middle')
  + label('date', 2094, 1064, '20250214', 'middle') + label('date', 3174, 1064, '20251022', 'end');
document.getElementById('volume').innerHTML = volume;
```
